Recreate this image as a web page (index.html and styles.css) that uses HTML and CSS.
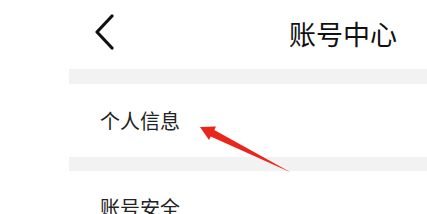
FILE: index.html
```html
<!DOCTYPE html>
<html lang="zh-CN">
  <head>
    <meta charset="UTF-8" />
    <meta name="viewport" content="width=device-width, initial-scale=1.0" />
    <title>账号中心</title>
    <link rel="stylesheet" href="styles.css">
  </head>
  <body>
    <div class="header">
      <svg class="back" width="24" height="36" viewBox="0 0 24 36">
        <path d="M18 2 L3 18 L18 34" fill="none" stroke="#111" stroke-width="3.2" stroke-linecap="round" stroke-linejoin="round" />
      </svg>
      <div class="title">账号中心</div>
    </div>
    <div class="list">
      <div class="gap"></div>
      <div class="item">个人信息</div>
      <div class="gap"></div>
      <div class="item">账号安全</div>
    </div>

    <!-- 标注箭头 -->
    <svg class="arrow" width="427" height="214" viewBox="0 0 427 214">
      <polygon points="200,127 216,126.5 214.3,130 291,172.5 210.7,136.6 209,140" fill="#e8261b" />
    </svg>
  </body>
</html>
```

FILE: styles.css
```css
body {
  margin: 0;
  background: #fff;
  font-family: "Noto Sans CJK SC", "Noto Sans", sans-serif;
  overflow: hidden;
}
.header {
  height: 69px;
  display: flex;
  justify-content: space-between;
  align-items: center;
  padding: 0 30px 0 94px;
  box-sizing: border-box;
}
.back {
  margin-top: -5px;
}
.title {
  font-size: 27px;
  color: #111;
  margin-top: -2px;
}
.list {
  margin-left: 69px;
}
.gap {
  height: 15px;
  background: #f2f2f2;
}
.item {
  height: 73px;
  line-height: 73px;
  padding-left: 31px;
  font-size: 20px;
  color: #222;
}
.item + .gap {
  height: 14px;
}
.arrow {
  position: absolute;
  left: 0;
  top: 0;
  pointer-events: none;
}
```
